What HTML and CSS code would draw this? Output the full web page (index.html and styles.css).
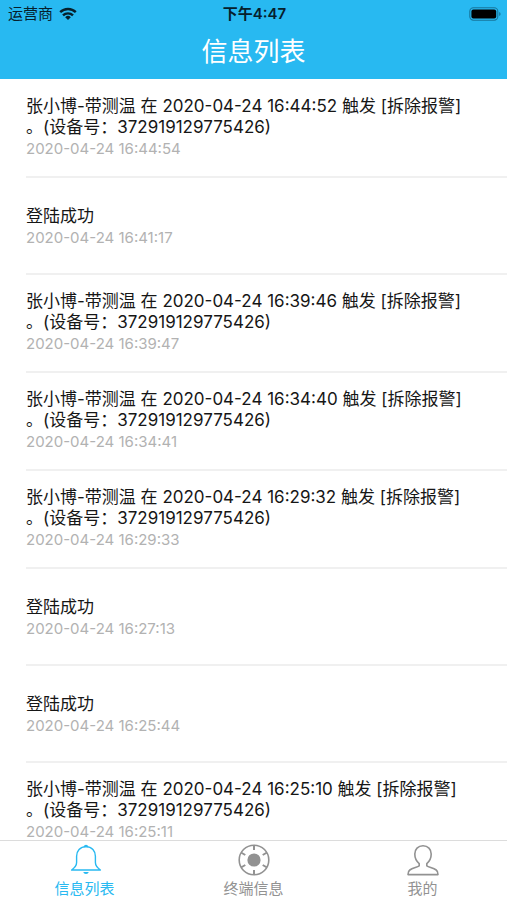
FILE: index.html
```html
<!DOCTYPE html>
<html lang="zh-CN">
<head>
    <meta charset="UTF-8">
    <meta name="viewport" content="width=device-width, initial-scale=1.0">
    <title>信息列表</title>
    <link rel="stylesheet" href="styles.css">
</head>
<body>
    <header class="header">
        <div class="status-bar">
            <div class="carrier">
                <span>运营商</span>
                <svg width="18" height="14" viewBox="0 0 18 14" fill="none" stroke="#06202c" stroke-width="2.4">
                    <path d="M1.2 5.2a11 11 0 0 1 15.6 0"/>
                    <path d="M4 8.4a7.2 7.2 0 0 1 10 0"/>
                    <path d="M9 12.9L6.2 10.2a4 4 0 0 1 5.6 0z" fill="#06202c" stroke="none"/>
                </svg>
            </div>
            <div class="clock">下午4:47</div>
            <div class="battery">
                <svg width="32" height="14" viewBox="0 0 32 14">
                    <rect x="0.8" y="0.8" width="28" height="12.4" rx="3.6" fill="none" stroke="#17769c" stroke-width="1.1"/>
                    <rect x="2.4" y="2.4" width="24.8" height="9.2" rx="2" fill="#000"/>
                    <path d="M30.2 5v4q1.4-.6 1.4-2t-1.4-2z" fill="#17769c"/>
                </svg>
            </div>
        </div>
        <h1 class="title">信息列表</h1>
    </header>

    <main class="list">
        <article class="item">
            <p class="text">张小博-带测温 在 2020-04-24 16:44:52 触发 [拆除报警]<br>。(设备号：372919129775426)</p>
            <time class="time">2020-04-24 16:44:54</time>
        </article>
        <article class="item single">
            <p class="text">登陆成功</p>
            <time class="time">2020-04-24 16:41:17</time>
        </article>
        <article class="item">
            <p class="text">张小博-带测温 在 2020-04-24 16:39:46 触发 [拆除报警]<br>。(设备号：372919129775426)</p>
            <time class="time">2020-04-24 16:39:47</time>
        </article>
        <article class="item">
            <p class="text">张小博-带测温 在 2020-04-24 16:34:40 触发 [拆除报警]<br>。(设备号：372919129775426)</p>
            <time class="time">2020-04-24 16:34:41</time>
        </article>
        <article class="item">
            <p class="text">张小博-带测温 在 2020-04-24 16:29:32 触发 [拆除报警]<br>。(设备号：372919129775426)</p>
            <time class="time">2020-04-24 16:29:33</time>
        </article>
        <article class="item single">
            <p class="text">登陆成功</p>
            <time class="time">2020-04-24 16:27:13</time>
        </article>
        <article class="item single">
            <p class="text">登陆成功</p>
            <time class="time">2020-04-24 16:25:44</time>
        </article>
        <article class="item">
            <p class="text">张小博-带测温 在 2020-04-24 16:25:10 触发 [拆除报警]<br>。(设备号：372919129775426)</p>
            <time class="time">2020-04-24 16:25:11</time>
        </article>
    </main>

    <nav class="tabs">
        <a class="tab active" href="#messages">
            <svg width="34" height="34" viewBox="0 0 34 34" fill="none" stroke="currentColor" stroke-width="1.4" stroke-linejoin="round">
                <path d="M18 3.600c-6 0-9.400 4.400-9.400 9.600v6.400c0 3.600-2.400 5.600-5 7.400h28.800c-2.600-1.800-5-3.800-5-7.400v-6.400c0-5.200-3.400-9.600-9.400-9.600z"/>
                <path d="M16.400 3.600a1.700 1.700 0 0 1 3.200 0z" fill="currentColor"/>
                <path d="M15.200 29h5.600q-.6 2-2.800 2t-2.800-2z" fill="currentColor" stroke="none"/>
            </svg>
            <span>信息列表</span>
        </a>
        <a class="tab" href="#devices">
            <svg width="34" height="34" viewBox="0 0 34 34" fill="none" stroke="currentColor" stroke-width="1.6">
                <circle cx="17" cy="17" r="14.800"/>
                <circle cx="17" cy="17" r="6.600" fill="currentColor" stroke="none"/>
                <path d="M17 2v5M17 27v5M4 9.500l4.300 2.500M25.700 22l4.300 2.500M4 24.500l4.300-2.500M25.700 12l4.300-2.500" stroke-width="2"/>
            </svg>
            <span>终端信息</span>
        </a>
        <a class="tab" href="#me">
            <svg width="34" height="34" viewBox="0 0 34 34" fill="none" stroke="currentColor" stroke-width="1.6" stroke-linejoin="round">
                <path d="M17 2.800c-5 0-8.200 3.400-8.200 8.200 0 4.400 1.800 7.400 4.400 9.600v2.200c-2 1.400-6.600 2.200-9.400 4.200-1.400 1-1.800 2.600-1.800 4.600h30c0-2-.4-3.600-1.800-4.600-2.800-2-7.400-2.800-9.400-4.200v-2.200c2.600-2.200 4.400-5.200 4.400-9.600 0-4.800-3.200-8.200-8.200-8.200z"/>
            </svg>
            <span>我的</span>
        </a>
    </nav>
</body>
</html>
```

FILE: styles.css
```css
* {
    box-sizing: border-box;
}
body {
    display: flex;
    flex-direction: column;
    height: 100vh;
    margin: 0;
    background-color: #fff;
    color: #161616;
    font-family: Inter, "Noto Sans CJK SC", sans-serif;
}
/* Header */
.header {
    flex: none;
    padding-bottom: 8px;
    background-color: #28b9f1;
}
.status-bar {
    display: grid;
    grid-template-columns: 1fr auto 1fr;
    align-items: center;
    height: 28px;
    padding: 0 6px 0 8px;
    color: #06202c;
    font-size: 15px;
    line-height: 20px;
}
.carrier {
    display: flex;
    align-items: center;
    gap: 6px;
}
.clock {
    font-weight: 600;
}
.battery {
    display: flex;
    justify-content: flex-end;
}
.title {
    margin: 0;
    padding-top: 4px;
    color: #fff;
    font-size: 26px;
    font-weight: 400;
    line-height: 39px;
    text-align: center;
}
/* Message list */
.list {
    flex: 1;
    min-height: 0;
    padding-top: 1px;
    overflow: hidden;
}
.item {
    display: flex;
    flex-direction: column;
    justify-content: center;
    height: 98px;
    margin-left: 26px;
    border-bottom: 2px solid #f0f0f0;
}
.item.single {
    height: 97px;
    padding-top: 3px;
}
.text {
    margin: 0;
    font-size: 17px;
    line-height: 21px;
    white-space: nowrap;
}
.time {
    color: #b2b2b2;
    font-size: 15px;
    line-height: 22px;
}
/* Bottom tabs */
.tabs {
    display: flex;
    flex: none;
    height: 60px;
    border-top: 1px solid #dcdcdc;
    background-color: #fff;
}
.tab {
    display: flex;
    flex: 1;
    flex-direction: column;
    align-items: center;
    gap: 1px;
    padding-top: 2px;
    color: #929292;
    font-size: 15px;
    line-height: 22px;
    text-decoration: none;
}
.tab svg {
    flex: none;
}
.tab.active {
    color: #28b9f1;
}
```
